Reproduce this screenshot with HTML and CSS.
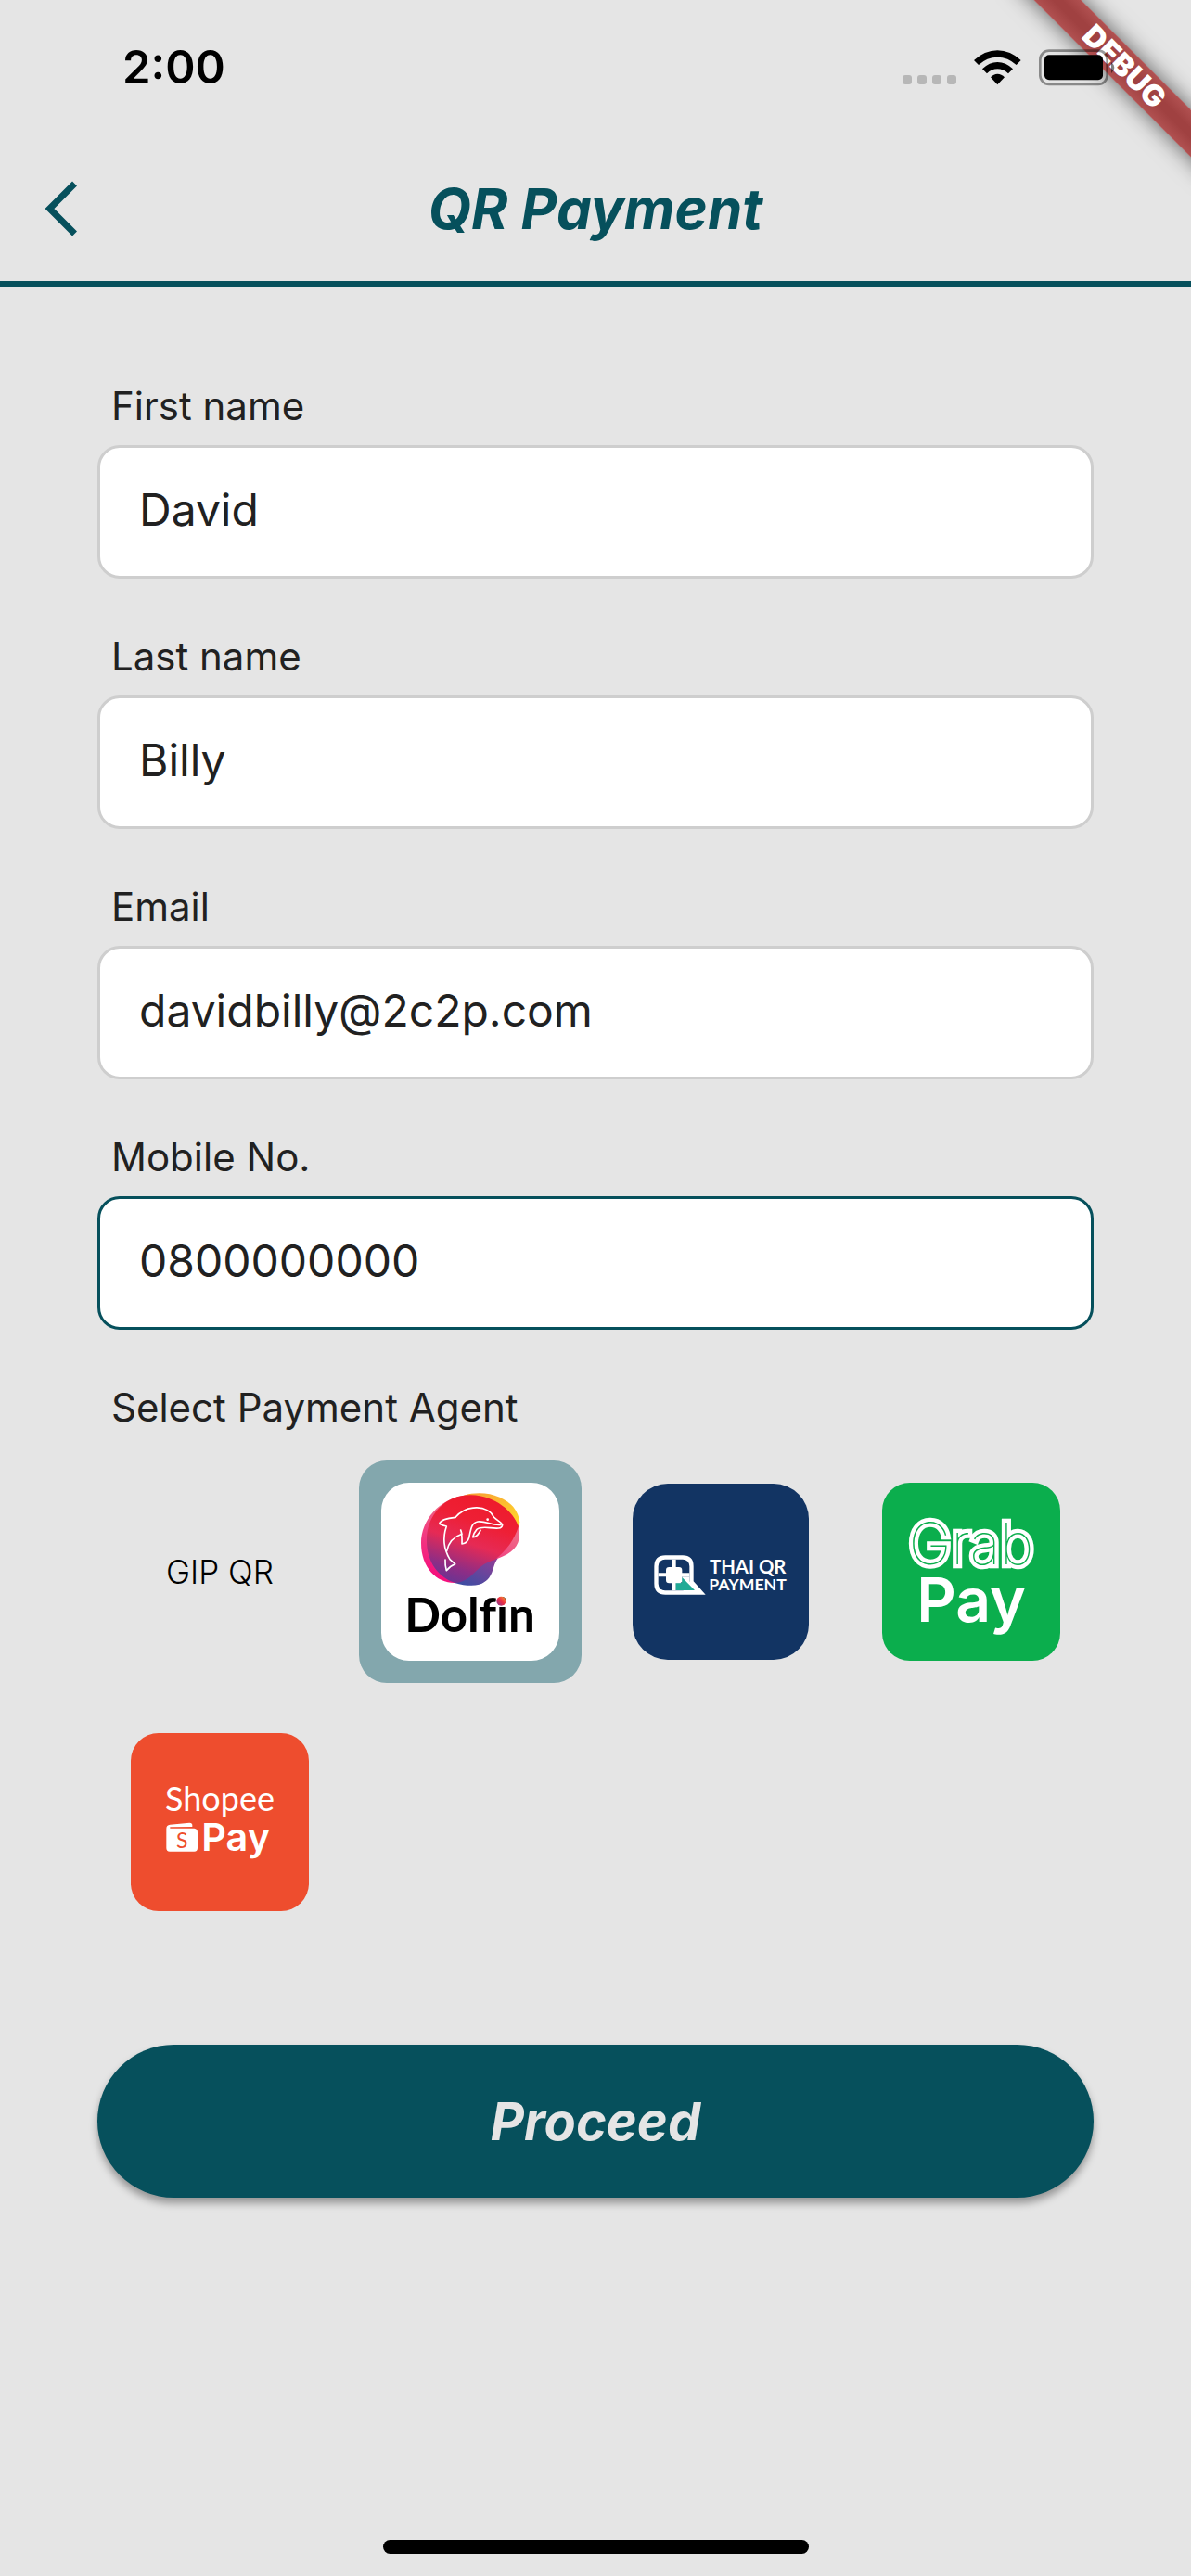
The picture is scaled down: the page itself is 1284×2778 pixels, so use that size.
FILE: index.html
```html
<!DOCTYPE html>
<html lang="en">
<head>
<meta charset="utf-8">
<meta name="viewport" content="width=device-width, initial-scale=1">
<title>QR Payment</title>
<link rel="stylesheet" href="styles.css">
</head>
<body>
<div class="screen">
  <div class="debug-corner"><div class="debug-ribbon">DEBUG</div></div>

  <div class="status-bar">
    <span class="clock">2:00</span>
    <div class="status-icons">
      <svg class="signal" viewBox="0 0 58 38" aria-hidden="true">
        <g fill="#b7b7b7"><rect x="0" y="27" width="10" height="10" rx="3"/><rect x="16" y="27" width="10" height="10" rx="3"/><rect x="32" y="27" width="10" height="10" rx="3"/><rect x="48" y="27" width="10" height="10" rx="3"/></g>
      </svg>
      <svg class="wifi" viewBox="330 161 153 114" aria-hidden="true">
        <path d="M330 194 Q365 162 406 162 Q447 162 482 194 L467 209 Q440 184 406 184 Q372 184 345 209Z"/>
        <path d="M357 222 Q380 200 406 200 Q433 200 456 222 L441 237 Q425 222 406 222 Q387 222 372 237Z"/>
        <path d="M384 249 Q394 238 406 238 Q419 238 429 249 L406 273Z"/>
      </svg>
      <svg class="battery" viewBox="540 158 246 120" aria-hidden="true">
        <rect x="544" y="163" width="217" height="109" rx="29" fill="none" stroke="#000" stroke-opacity=".4" stroke-width="8"/>
        <rect x="558" y="177" width="189" height="81" rx="15"/>
        <path d="M774 200 Q784 208 784 218 Q784 228 774 236Z" fill-opacity=".5"/>
      </svg>
    </div>
  </div>

  <header class="app-bar">
    <button class="back" type="button" aria-label="Back">
      <svg viewBox="0 0 36 60" aria-hidden="true"><path d="M32.500 3 L5.500 30 L32.500 57" fill="none" stroke="currentColor" stroke-width="7"/></svg>
    </button>
    <h1>QR Payment</h1>
  </header>

  <form class="payment">
    <div class="field">
      <label for="first">First name</label>
      <input id="first" type="text" value="David">
    </div>
    <div class="field">
      <label for="last">Last name</label>
      <input id="last" type="text" value="Billy">
    </div>
    <div class="field">
      <label for="email">Email</label>
      <input id="email" type="email" value="davidbilly@2c2p.com">
    </div>
    <div class="field">
      <label for="mobile">Mobile No.</label>
      <input id="mobile" class="active" type="tel" value="0800000000">
    </div>

    <fieldset class="agents">
      <legend>Select Payment Agent</legend>
      <div class="agent-grid">
        <label class="agent"><input type="radio" name="agent" value="gip"><span>GIP QR</span></label>

        <label class="agent"><input type="radio" name="agent" value="dolfin" checked aria-label="Dolfin">
          <svg class="logo" viewBox="123 117 576 576" aria-hidden="true">
            <defs>
              <linearGradient id="dolfin-main" x1=".65" y1="0" x2=".3" y2="1"><stop offset="0" stop-color="#ee1b2b"/><stop offset=".3" stop-color="#ee1f35"/><stop offset=".55" stop-color="#e62a55"/><stop offset=".85" stop-color="#8d2d86"/><stop offset="1" stop-color="#6b3492"/></linearGradient>
              <linearGradient id="dolfin-pink" x1=".8" y1="0" x2=".3" y2="1"><stop offset="0" stop-color="#f07d94"/><stop offset=".35" stop-color="#ef6385"/><stop offset="1" stop-color="#f50f7d"/></linearGradient>
              <linearGradient id="dolfin-violet" x1="1" y1="0" x2=".2" y2="1"><stop offset="0" stop-color="#9a3c94"/><stop offset="1" stop-color="#3c4da3"/></linearGradient>
              <linearGradient id="dolfin-gold" x1="0" y1="0" x2="1" y2="1"><stop offset="0" stop-color="#f89b34"/><stop offset="1" stop-color="#ffdc2b"/></linearGradient>
              <linearGradient id="dolfin-dot" x1="1" y1="0" x2="0" y2="1"><stop offset="0" stop-color="#f8a52e"/><stop offset=".5" stop-color="#ea2c45"/><stop offset="1" stop-color="#7d3a99"/></linearGradient>
            </defs>
            <rect x="123" y="117" width="576" height="576" rx="90" fill="#fff"/>
            <path d="M390 158C455 138 520 160 550 195Q568 218 571 245L565 262Z" fill="url(#dolfin-gold)"/>
            <path d="M395 158C310 168 252 238 252 312C252 392 302 441 360 441C430 435 450 385 500 362C545 346 570 322 570 285Q570 266 563 250Z" fill="url(#dolfin-pink)"/>
            <path d="M360 441Q410 455 440 446C490 430 480 385 500 362L440 350Z" fill="url(#dolfin-violet)"/>
            <path d="M410 157C330 157 270 220 270 304C270 375 310 425 362 441C420 437 430 380 490 367C530 335 554 300 567 258C550 210 490 157 410 157Z" fill="url(#dolfin-main)"/>
            <g fill="none" stroke="#fff" stroke-width="5" stroke-linecap="round" stroke-linejoin="round">
              <path d="M363 229C400 185 470 190 487 228C496 238 513 245 515 253Q514 263 503 264C480 267 450 254 432 268Q423 278 419 293Q427 294 434 286Q441 278 444 271"/>
              <path d="M363 229C340 231 316 235 311 250Q321 256 334 258C323 290 324 330 345 365Q355 374 362 380Q346 386 334 401Q329 386 330 366"/>
              <path d="M335 338C341 310 360 291 384 283Q382 275 380 270Q385 282 384 315Q402 313 407 295C413 265 415 247 435 243C460 239 480 256 510 253"/>
            </g>
            <circle cx="467" cy="236" r="4" fill="#fff"/>
            <text class="dolfin-name" x="199" y="600">Dolfin</text>
            <circle cx="511" cy="500" r="15" fill="url(#dolfin-dot)"/>
          </svg>
        </label>

        <label class="agent"><input type="radio" name="agent" value="thaiqr" aria-label="Thai QR Payment">
          <svg class="logo" viewBox="63 57 576 576" aria-hidden="true">
            <rect x="66" y="60" width="570" height="570" rx="114" fill="#123463"/>
            <path d="M172 292H228Q263 292 263 327V376L302 419H172Q136 419 136 383V328Q136 292 172 292Z" fill="#fff"/>
            <rect x="149" y="305" width="101" height="101" rx="22" fill="#123463"/>
            <path d="M192 305H206V330H216Q226 330 226 340V349H250V361H226V372Q226 382 216 382H206V406H192V382H184Q174 382 174 372V361H149V349H174V340Q174 330 184 330H192Z" fill="#fff"/>
            <path d="M226 361H250V376L272 406H206V382H226Z" fill="#fff"/>
            <path d="M226 363L267 405H206V382H220Q226 382 226 376Z" fill="#20aa96"/>
            <text class="thai-top" x="315" y="352">THAI QR</text>
            <text class="thai-bottom" x="313" y="405">PAYMENT</text>
          </svg>
        </label>

        <label class="agent"><input type="radio" name="agent" value="grabpay" aria-label="GrabPay">
          <svg class="logo" viewBox="63 57 576 576" aria-hidden="true">
            <rect x="63" y="57" width="576" height="576" rx="90" fill="#0bae4d"/>
            <text class="grab-name" x="351" y="320">Grab</text>
            <text class="grab-pay" x="351" y="508">Pay</text>
          </svg>
        </label>

        <label class="agent"><input type="radio" name="agent" value="shopeepay" aria-label="ShopeePay">
          <svg class="logo" viewBox="63 687 576 576" aria-hidden="true">
            <rect x="63" y="687" width="576" height="576" rx="90" fill="#ee4d2e"/>
            <text class="shopee-name" x="351" y="940">Shopee</text>
            <path d="M190 983L253 977Q262 977 262 985V990L190 991V995H268Q279 996 279 1007V1059Q279 1070 268 1070H189Q178 1070 178 1059V996Q178 984 190 983Z" fill="#fff"/>
            <text class="shopee-s" x="229" y="1058">S</text>
            <text class="shopee-pay" x="292" y="1067">Pay</text>
          </svg>
        </label>
      </div>
    </fieldset>

    <button class="proceed" type="submit">Proceed</button>
  </form>

  <div class="home-indicator"></div>
</div>
</body>
</html>
```
FILE: styles.css
```css
:root {
  --teal: #06505c;
  --bg: #e5e5e5;
}

* {
  box-sizing: border-box;
}

body {
  margin: 0;
  background: var(--bg);
  color: #212121;
  font-family: Inter, "Liberation Sans", sans-serif;
}

.screen {
  position: relative;
  display: flex;
  flex-direction: column;
  min-height: 100vh;
}

/* Status bar */
.status-bar {
  position: relative;
  z-index: 2;
  display: flex;
  justify-content: space-between;
  align-items: center;
  height: 146px;
  padding: 0 82px 0 132px;
  color: #000;
}

.clock {
  font-size: 49px;
  font-weight: 600;
  line-height: 60px;
}

.status-icons {
  display: flex;
  align-items: center;
  gap: 19px;
}

.signal {
  width: 58px;
  height: 38px;
}

.wifi {
  width: 51px;
  height: 38px;
}

.battery {
  width: 82px;
  height: 40px;
}

/* Corner ribbon */
.debug-corner {
  position: absolute;
  z-index: 1;
  top: 0;
  right: 0;
  width: 240px;
  height: 240px;
  overflow: hidden;
}

.debug-ribbon {
  position: absolute;
  top: 54px;
  left: 18px;
  width: 300px;
  height: 36px;
  transform: rotate(45deg);
  background: linear-gradient(#b15151, #a04141 40%, #a04141 60%, #b15151);
  box-shadow: 0 0 24px rgba(0, 0, 0, .6);
  color: #fff;
  font-size: 32px;
  font-weight: 900;
  line-height: 36px;
  text-align: center;
}

/* App bar */
.app-bar {
  display: grid;
  grid-template-columns: 132px 1fr 132px;
  align-items: center;
  height: 163px;
  border-bottom: 6px solid var(--teal);
  color: var(--teal);
}

.back {
  display: flex;
  align-items: center;
  height: 120px;
  padding: 0 48px;
  border: 0;
  background: none;
  color: inherit;
}

.back svg {
  width: 36px;
  height: 60px;
}

h1 {
  margin: 0;
  font-size: 60px;
  font-style: italic;
  font-weight: 700;
  line-height: 72px;
  text-align: center;
}

/* Form */
.payment {
  display: flex;
  flex-direction: column;
  gap: 54px;
  padding: 99px 105px 0;
}

.field {
  display: flex;
  flex-direction: column;
  gap: 12px;
}

.field label,
.agents legend {
  padding: 0 15px;
  font-size: 42px;
  line-height: 60px;
}

.field input {
  width: 100%;
  height: 144px;
  padding: 0 42px 6px;
  border: 3px solid #cecece;
  border-radius: 24px;
  outline: 0;
  background: #fff;
  color: inherit;
  font-family: inherit;
  font-size: 48px;
}

.field input.active {
  border-color: var(--teal);
}

/* Payment agents */
.agents {
  min-width: 0;
  margin: 0;
  padding: 0;
  border: 0;
}

.agent-grid {
  display: grid;
  grid-template-columns: repeat(auto-fill, 240px);
  gap: 30px;
  padding: 27px 12px 0;
}

.agent {
  position: relative;
  display: flex;
  align-items: center;
  justify-content: center;
  height: 240px;
  border-radius: 30px;
  color: #000;
  font-size: 35px;
  font-weight: 300;
}

.agent:has(input:checked) {
  background: #83a7ad;
}

.agent input {
  position: absolute;
  inset: 0;
  margin: 0;
  appearance: none;
}

.logo {
  width: 192px;
  height: 192px;
}

.logo text {
  font-family: Lato, sans-serif;
  font-variant-ligatures: none;
  fill: #fff;
}

.logo .dolfin-name {
  font-size: 153px;
  font-weight: 700;
  fill: #000;
}

.logo .thai-top {
  font-size: 61px;
  font-weight: 700;
}

.logo .thai-bottom {
  font-size: 53px;
  font-weight: 700;
}

.logo .grab-name {
  font-family: Inter, sans-serif;
  font-size: 186px;
  font-weight: 100;
  text-anchor: middle;
  fill: #0bae4d;
  stroke: #fff;
  stroke-width: 26px;
  paint-order: stroke;
}

.logo .grab-pay {
  font-family: Inter, sans-serif;
  font-size: 198px;
  font-weight: 600;
  text-anchor: middle;
}

.logo .shopee-name {
  font-size: 108px;
  font-weight: 400;
  text-anchor: middle;
}

.logo .shopee-s {
  font-size: 69px;
  font-weight: 400;
  text-anchor: middle;
  fill: #ee4d2e;
}

.logo .shopee-pay {
  font-family: Inter, sans-serif;
  font-size: 124px;
  font-weight: 600;
}

/* Submit */
.proceed {
  height: 165px;
  margin-top: 66px;
  border: 0;
  border-radius: 83px;
  background: var(--teal);
  box-shadow: 0 6px 9px rgba(0, 0, 0, .35);
  color: var(--bg);
  font-family: inherit;
  font-size: 56px;
  font-style: italic;
  font-weight: 700;
}

.home-indicator {
  align-self: center;
  width: 459px;
  max-width: 50%;
  height: 15px;
  margin: auto 0 24px;
  border-radius: 8px;
  background: #000;
}
```
